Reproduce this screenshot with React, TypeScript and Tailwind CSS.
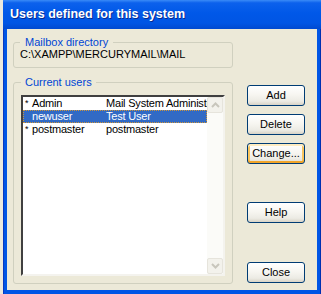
import React from 'react';

type User = { star: boolean; name: string; full: string; selected?: boolean };

const users: User[] = [
  { star: true, name: 'Admin', full: 'Mail System Administrator' },
  { star: false, name: 'newuser', full: 'Test User', selected: true },
  { star: true, name: 'postmaster', full: 'postmaster' },
];

const XpButton: React.FC<{ label: string; focused?: boolean; className?: string }> = ({ label, focused, className }) => (
  <button
    className={`w-[58px] h-[21px] rounded-[3px] border border-[#003C74] bg-[linear-gradient(to_bottom,#FFFFFF_0%,#F7F6F1_45%,#ECEBE4_80%,#D8D3C6_100%)] text-[11px] leading-none text-black flex items-center justify-center ${
      focused
        ? 'shadow-[inset_0_2px_0_#FFECC0,inset_0_-2px_0_#F0A42A,inset_2px_0_0_#F9C55E,inset_-2px_0_0_#F9C55E]'
        : ''
    } ${className ?? ''}`}
  >
    {label}
  </button>
);

const Arrow: React.FC<{ up?: boolean }> = ({ up }) => (
  <div className="w-[16px] h-[16px] rounded-[2px] border border-[#E6E4DC] bg-[#F3F2EC] flex items-center justify-center">
    <svg width="9" height="6" viewBox="0 0 9 6">
      <path d={up ? 'M1 5 L4.5 1.5 L8 5' : 'M1 1 L4.5 4.5 L8 1'} fill="none" stroke="#C8C6BC" strokeWidth="2" />
    </svg>
  </div>
);

export default function App() {
  return (
    <div className="w-[321px] h-[294px] overflow-hidden bg-[#EBE9DE] font-['Liberation_Sans',Arial,sans-serif] text-[11px] text-black">
      <div className="ml-[3px] w-[318px] h-[294px] flex flex-col">
        {/* title bar */}
        <div className="h-[29px] shrink-0 bg-[linear-gradient(to_bottom,#3A8BF7_0%,#0C61EC_10%,#0058E8_45%,#0055E4_80%,#0049D0_100%)] flex items-center pl-[7px]">
          <span className="text-white font-bold text-[12.5px] [text-shadow:1px_1px_0_#0A2B8F]">
            Users defined for this system
          </span>
        </div>

        {/* frame + client */}
        <div className="flex-1 flex bg-[#0055E5] px-[4px] pb-[4px] shadow-[inset_-1px_0_0_#0030B0,inset_1px_0_0_#0838C0]">
          <div className="flex-1 bg-[#ECE9D8] flex">
            {/* left column */}
            <div className="ml-[6px] w-[220px] shrink-0 flex flex-col">
              <fieldset className="mt-[8px] min-w-0 border border-[#D0D0BF] rounded-[3px] px-[6px] pb-[6px]">
                <legend className="px-[5px] leading-[11px] text-[#0046D5]">Mailbox directory</legend>
                <div className="leading-[13px]">C:\XAMPP\MERCURYMAIL\MAIL</div>
              </fieldset>

              <fieldset className="mt-[9px] min-w-0 border border-[#D0D0BF] rounded-[3px] px-[7px] pb-[7px]">
                <legend className="px-[4px] leading-[11px] text-[#0046D5]">Current users</legend>
                <div className="mt-[7px] h-[181px] border-2 border-t-[#404040] border-l-[#404040] border-r-[#F4F3EE] border-b-[#F4F3EE] bg-white flex">
                  <div className="flex-1 min-w-0 flex flex-col">
                    {users.map((u) => (
                      <div
                        key={u.name}
                        className={`h-[13px] flex items-center whitespace-nowrap overflow-hidden leading-[13px] tracking-[-0.2px] ${
                          u.selected ? 'bg-[#316AC5] text-white border border-dotted border-[#CE953A]' : ''
                        }`}
                      >
                        <span className={`${u.selected ? 'w-[8px]' : 'w-[9px]'} pl-[2px] shrink-0 text-[9px]`}>{u.star ? '*' : ''}</span>
                        <span className="w-[74px] shrink-0">{u.name}</span>
                        <span>{u.full}</span>
                      </div>
                    ))}
                  </div>
                  <div className="w-[16px] shrink-0 bg-[#FBFBF8] flex flex-col justify-between">
                    <Arrow up />
                    <Arrow />
                  </div>
                </div>
              </fieldset>
            </div>

            {/* right column */}
            <div className="ml-[14px] flex flex-col pt-[56px]">
              <XpButton label="Add" />
              <XpButton label="Delete" className="mt-[8px]" />
              <XpButton label="Change..." focused className="mt-[8px]" />
              <XpButton label="Help" className="mt-[38px]" />
              <XpButton label="Close" className="mt-[39px]" />
            </div>
          </div>
        </div>
      </div>
    </div>
  );
}
